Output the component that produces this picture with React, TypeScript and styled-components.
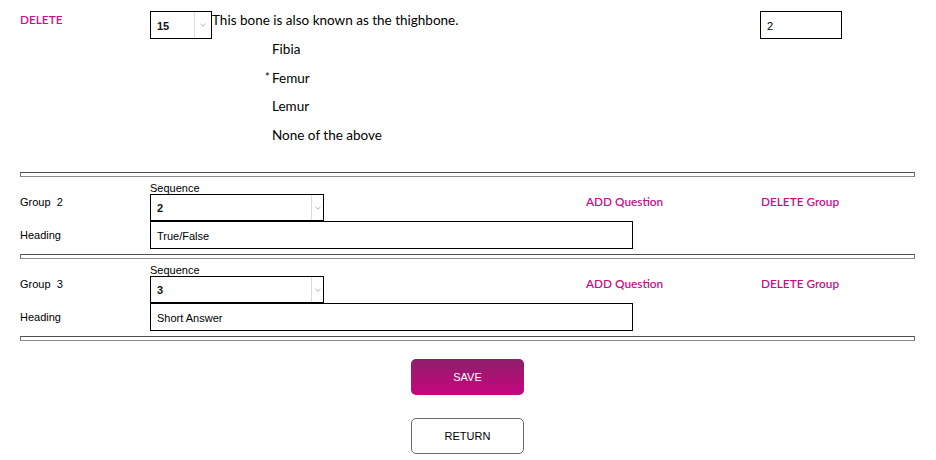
import React from "react";
import styled, { createGlobalStyle } from "styled-components";

const GlobalStyle = createGlobalStyle`
  html, body { margin: 0; padding: 0; background: #fff; }
  body { font-family: "Liberation Sans", Arial, sans-serif; color: #000; }
`;

const PINK = "#c8108a";
const GEO = `"Lato", "Noto Sans", sans-serif`;
const UI = `"Liberation Sans", Arial, sans-serif`;

const Page = styled.div`
  width: 936px;
  box-sizing: border-box;
  padding: 0 21px 0 20px;
`;

const QuestionBlock = styled.div`
  display: grid;
  grid-template-columns: 130px 610px 82px;
  align-items: start;
  padding: 11px 0 27px;
`;

const PinkLink = styled.a<{ $size?: number }>`
  font-family: ${GEO};
  font-size: ${(p) => p.$size ?? 11.8}px;
  font-weight: 600;
  color: ${PINK};
  text-decoration: none;
  cursor: pointer;
`;

const DeleteLink = styled(PinkLink)`
  margin-top: 2px;
  line-height: 14px;
`;

const QuestionMain = styled.div`
  display: flex;
  flex-direction: column;
`;

const QuestionLine = styled.div`
  display: flex;
  align-items: flex-start;
`;

const QuestionText = styled.div`
  font-family: ${GEO};
  font-size: 13.5px;
  line-height: 16px;
  padding-top: 1px;
`;

const AnswerList = styled.ul`
  list-style: none;
  margin: 0;
  padding: 0 0 0 115px;
  display: flex;
  flex-direction: column;
  gap: 8.7px;
`;

const Answer = styled.li`
  display: flex;
  height: 20px;
  align-items: center;
  font-family: ${GEO};
  font-size: 13.5px;
`;

const Marker = styled.span`
  width: 7px;
  font-size: 11px;
  align-self: flex-start;
  line-height: 14px;
  padding-top: 2px;
`;

const SelectFrame = styled.div<{ $w: number; $h: number }>`
  display: flex;
  width: ${(p) => p.$w}px;
  height: ${(p) => p.$h}px;
  box-sizing: border-box;
  border: 1px solid #000;
  background: #fff;
  flex: none;
`;

const NativeSelect = styled.select`
  flex: 1;
  min-width: 0;
  appearance: none;
  -webkit-appearance: none;
  border: none;
  outline: none;
  background: transparent;
  font-family: ${UI};
  font-size: 11px;
  font-weight: 700;
  color: #111;
  padding: 1px 0 0 6px;
  margin: 0;
`;

const ArrowCell = styled.span<{ $w: number }>`
  width: ${(p) => p.$w}px;
  border-left: 1px solid #dcdcdc;
  display: flex;
  align-items: center;
  justify-content: center;
  flex: none;
`;

const Chevron = () => (
  <svg width="6" height="4" viewBox="0 0 6 4" fill="none">
    <polyline points="0.5,0.8 3,3.2 5.5,0.8" stroke="#b4b4b4" strokeWidth="1" />
  </svg>
);

const SelectBox = ({ w, h, arrow, value }: { w: number; h: number; arrow: number; value: string }) => (
  <SelectFrame $w={w} $h={h}>
    <NativeSelect defaultValue={value}>
      <option value={value}>{value}</option>
    </NativeSelect>
    <ArrowCell $w={arrow}>
      <Chevron />
    </ArrowCell>
  </SelectFrame>
);

const TextBox = styled.input<{ $w: number; $h: number }>`
  width: ${(p) => p.$w}px;
  height: ${(p) => p.$h}px;
  box-sizing: border-box;
  border: 1px solid #000;
  border-radius: 0;
  outline: none;
  margin: 0;
  padding: 1px 0 0 6px;
  font-family: ${UI};
  font-size: 11px;
  color: #000;
  background: #fff;
`;

const Rule = styled.div`
  height: 5px;
  box-sizing: border-box;
  border: 1px solid #707070;
  border-top-color: #505050;
  border-bottom-color: #8a8a8a;
`;

const Group = styled.section`
  display: grid;
  grid-template-columns: 130px 436px 175px 1fr;
  grid-template-rows: auto auto;
  align-items: center;
  padding: 5px 0 5px;
`;

const Label = styled.span`
  font-family: ${UI};
  font-size: 11px;
  white-space: pre;
`;

const SeqField = styled.div`
  display: flex;
  flex-direction: column;
`;

const SeqLabel = styled.span`
  font-family: ${UI};
  font-size: 11px;
  line-height: 12px;
`;

const HeadingCell = styled.div`
  grid-column: 2 / span 3;
  display: flex;
`;

const Actions = styled.div`
  display: flex;
  flex-direction: column;
  align-items: center;
  gap: 23px;
  padding-top: 18px;
  margin-left: -20px;
  margin-right: -20px;
`;

const Button = styled.button<{ $primary?: boolean }>`
  width: 113px;
  height: 36px;
  box-sizing: border-box;
  border-radius: 5px;
  font-family: ${UI};
  font-size: 11px;
  cursor: pointer;
  color: ${(p) => (p.$primary ? "#fff" : "#000")};
  background: ${(p) => (p.$primary ? "linear-gradient(#8c1f69, #c8057f)" : "#fff")};
  border: ${(p) => (p.$primary ? "none" : "1px solid #6a6a6a")};
`;

const groups = [
  { n: 2, heading: "True/False" },
  { n: 3, heading: "Short Answer" },
];

const answers = [
  { text: "Fibia", correct: false },
  { text: "Femur", correct: true },
  { text: "Lemur", correct: false },
  { text: "None of the above", correct: false },
];

export default function App() {
  return (
    <>
      <GlobalStyle />
      <Page>
        <QuestionBlock>
          <DeleteLink $size={11.8}>DELETE</DeleteLink>
          <QuestionMain>
            <QuestionLine>
              <SelectBox w={62} h={28} arrow={16} value="15" />
              <QuestionText>This bone is also known as the thighbone.</QuestionText>
            </QuestionLine>
            <AnswerList>
              {answers.map((a) => (
                <Answer key={a.text}>
                  <Marker>{a.correct ? "*" : ""}</Marker>
                  {a.text}
                </Answer>
              ))}
            </AnswerList>
          </QuestionMain>
          <TextBox $w={82} $h={28} defaultValue="2" />
        </QuestionBlock>
        <Rule />
        {groups.map((g) => (
          <React.Fragment key={g.n}>
            <Group>
              <Label>{`Group  ${g.n}`}</Label>
              <SeqField>
                <SeqLabel>Sequence</SeqLabel>
                <SelectBox w={174} h={27} arrow={11} value={String(g.n)} />
              </SeqField>
              <PinkLink>ADD Question</PinkLink>
              <PinkLink>DELETE Group</PinkLink>
              <Label>Heading</Label>
              <HeadingCell>
                <TextBox $w={483} $h={28} defaultValue={g.heading} />
              </HeadingCell>
            </Group>
            <Rule />
          </React.Fragment>
        ))}
        <Actions>
          <Button $primary>SAVE</Button>
          <Button>RETURN</Button>
        </Actions>
      </Page>
    </>
  );
}
